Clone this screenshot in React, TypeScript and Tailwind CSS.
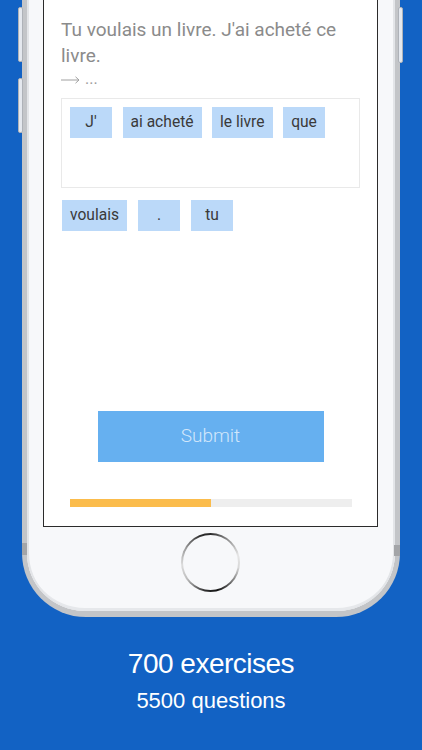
import React from "react";

const answer = ["J'", "ai acheté", "le livre", "que"];
const bank = ["voulais", ".", "tu"];

function Chip({ label }: { label: string }) {
  return (
    <div className="h-[31px] min-w-[42px] px-[8px] flex items-center justify-center bg-[#bbd9f9] text-[15.6px] text-[#3a3a3a] leading-none">
      {label}
    </div>
  );
}

function HomeButton() {
  return (
    <div className="mt-[6px] w-[59px] h-[59px] rounded-full p-[2px] bg-[conic-gradient(from_0deg,#2a2a2a_0deg,#8a8a8a_35deg,#e6e6e6_75deg,#d8d8d8_100deg,#7a7a7a_130deg,#141414_165deg,#2c2c2c_190deg,#bdbdbd_235deg,#dcdcdc_265deg,#9a9a9a_300deg,#2a2a2a_340deg,#2a2a2a_360deg)]">
      <div className="w-full h-full rounded-full bg-[#f7f8fa]" />
    </div>
  );
}

export default function App() {
  return (
    <div className="w-[422px] h-[750px] overflow-hidden bg-[#1262c4] flex flex-col font-['Roboto',sans-serif]">
      {/* phone */}
      <div className="relative ml-[22px] w-[378px] h-[617px] shrink-0">
        {/* side buttons */}
        <div className="absolute left-[-4px] top-[7px] w-[5px] h-[55px] rounded-[2px] bg-[#e4e8ee] border border-[#aeb2b8]" />
        <div className="absolute left-[-4px] top-[78px] w-[5px] h-[55px] rounded-[2px] bg-[#e4e8ee] border border-[#aeb2b8]" />
        <div className="absolute left-[376px] top-[7px] w-[5px] h-[56px] rounded-[2px] bg-[#e4e8ee] border border-[#aeb2b8]" />

        <div className="h-full rounded-b-[64px] bg-[#c3c5c8] px-[5px] pb-[6px]">
          <div className="relative h-full rounded-b-[58px] bg-[#f7f8fa] shadow-[inset_2px_0_0_#e3e5e8,inset_-2px_0_0_#e3e5e8,inset_0_-3px_0_#e6e8eb] flex flex-col items-start pl-[16px]">
            {/* screen */}
            <div className="w-[335px] h-[527px] shrink-0 bg-white border-x border-b border-[#2b2b2b] flex flex-col pl-[17px]">
              <p className="pt-[17px] pr-[14px] text-[19px] leading-[26px] text-[#8b8b8b]">
                Tu voulais un livre. J'ai acheté ce livre.
              </p>
              <p className="h-[20px] flex items-center gap-[5px] text-[16px] leading-[20px] text-[#9c9c9c]">
                <svg width="19" height="8" viewBox="0 0 19 8" className="mt-[2px]">
                  <path d="M0 4H18M14.5 0.8L18 4L14.5 7.2" fill="none" stroke="#a0a0a0" strokeWidth="1" />
                </svg>
                <span>...</span>
              </p>

              <div className="mt-[9px] w-[299px] h-[90px] border border-[#e9e9e9] p-[8px] flex flex-wrap content-start gap-[10.5px]">
                {answer.map((w) => (
                  <Chip key={w} label={w} />
                ))}
              </div>

              <div className="mt-[12px] ml-[1px] flex gap-[11px]">
                {bank.map((w) => (
                  <Chip key={w} label={w} />
                ))}
              </div>

              <div className="-ml-[17px] mt-[180px] flex flex-col items-center">
                <div className="w-[226px] h-[51px] bg-[#66b0f0] flex items-center justify-center text-[19px] font-light text-[#d2e7fb]">
                  Submit
                </div>
                <div className="mt-[37px] w-[282px] h-[8px] bg-[#eeeeee]">
                  <div className="h-full bg-[#fbbc4c]" style={{ width: "50%" }} />
                </div>
              </div>
            </div>

            <div className="w-[335px] flex justify-center">
              <HomeButton />
            </div>
          </div>
        </div>

        {/* antenna bands */}
        <div className="absolute left-0 top-[543px] w-[5px] h-[12px] bg-[#a3a5a8]" />
        <div className="absolute right-0 top-[545px] w-[6px] h-[11px] bg-[#a3a5a8]" />
      </div>

      {/* caption */}
      <div className="flex flex-col items-center text-white font-['Liberation_Sans',Arial,sans-serif]">
        <p className="mt-[31px] text-[28px] leading-[32px] tracking-[-0.5px]">700 exercises</p>
        <p className="mt-[8px] text-[22px] leading-[26px]">5500 questions</p>
      </div>
    </div>
  );
}
